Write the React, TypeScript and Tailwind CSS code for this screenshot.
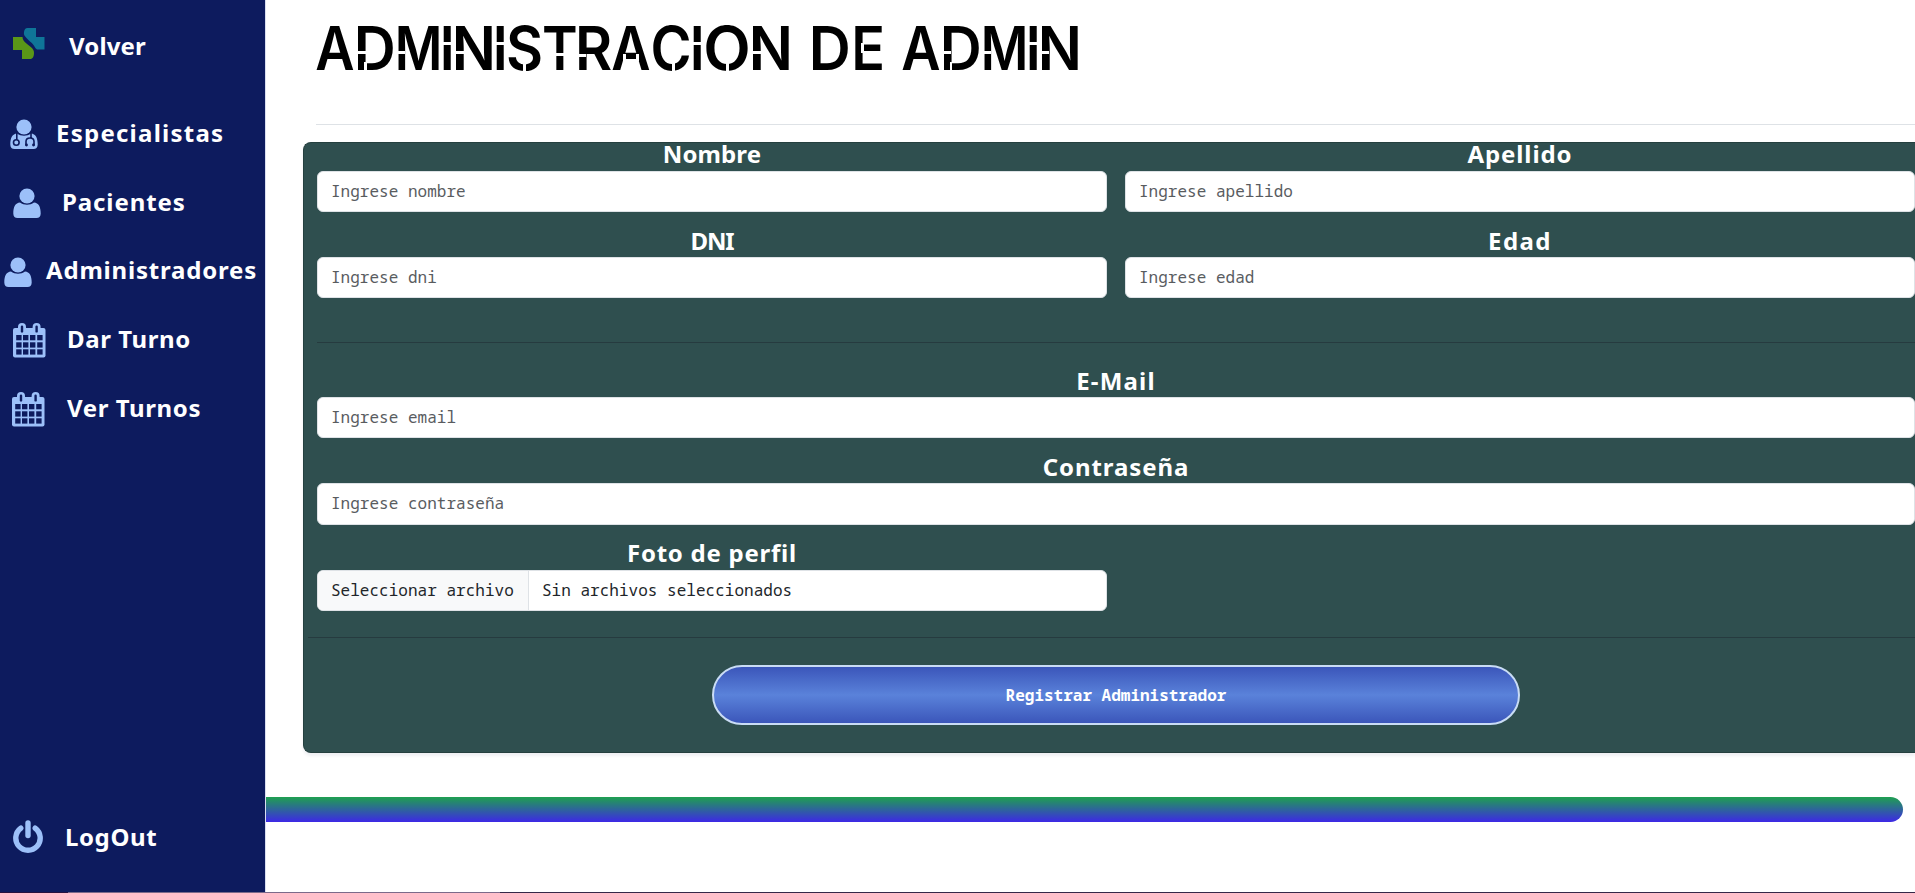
import type { ReactNode } from "react";

const LABEL_FONT = "font-['Noto_Sans','Open_Sans',sans-serif] font-bold text-[24px]";
const MONO_FONT = "font-['Noto_Sans_Mono','Liberation_Mono',monospace] font-normal text-[16px] tracking-[0.02px]";

function LogoIcon() {
  return (
    <svg width="34" height="33" viewBox="0 0 34 33" className="shrink-0">
      <path d="M15.500 1H24v9h8.500v12.500H26c-2.500 0-3-2.500-4.500-4.500-2-2.800-5-4.500-7-7C12.500 9 11.500 7.500 12 5c.4-2.500 1.500-4 3.500-4z" fill="#0f7598" />
      <path d="M1 10h9.500c0 2.500 1.500 4.500 4 6.500 3 2.500 7.500 5 7.500 9 0 4-1 6.500-4 6.500h-8v-9H1z" fill="#5a9718" />
    </svg>
  );
}

function UserShape() {
  return (
    <>
      <circle cx="14" cy="8" r="7.600" />
      <path d="M7 14.500C2.500 15 .3 18.500.3 25.500.3 28.500 2 30 4.500 30h19c2.500 0 4.200-1.500 4.200-4.500 0-7-2.200-10.500-6.700-11-4 3-10 3-14 0z" />
    </>
  );
}

function UserIcon() {
  return (
    <svg width="28" height="30" viewBox="0 0 28 30" fill="#9cc0f9" className="shrink-0">
      <UserShape />
    </svg>
  );
}

function DoctorIcon() {
  return (
    <svg width="28" height="30" viewBox="0 0 28 30" fill="#9cc0f9" className="shrink-0">
      <UserShape />
      <g fill="none" stroke="#0d1b5e" strokeWidth="1.600">
        <path d="M6.800 14v6.500" />
        <circle cx="6.300" cy="23.500" r="2.800" />
        <path d="M21 14v5M16 26.500v-4c0-2 1.500-3.500 4-3.500s4 1.500 4 3.500v4" />
      </g>
      <g fill="#0d1b5e">
        <circle cx="16.500" cy="26" r="1.400" />
        <circle cx="23.500" cy="26" r="1.400" />
      </g>
    </svg>
  );
}

function CalendarIcon() {
  const xs = [3.2, 10, 17, 24.2];
  const ys = [12, 19.3, 26.3];
  return (
    <svg width="33" height="35" viewBox="0 0 33 35" className="shrink-0">
      <rect x="0" y="5" width="32.500" height="29.500" rx="2" fill="#9cc0f9" />
      <rect x="5" y="0" width="8" height="11" rx="4" fill="#9cc0f9" />
      <rect x="19.600" y="0" width="8" height="11" rx="4" fill="#9cc0f9" />
      <rect x="7.800" y="2.600" width="2.400" height="7" rx="1.200" fill="#0d1b5e" />
      <rect x="22.400" y="2.600" width="2.400" height="7" rx="1.200" fill="#0d1b5e" />
      {ys.map((y) =>
        xs.map((x) => <rect key={`${x}-${y}`} x={x} y={y} width="5.400" height="5.300" fill="#0d1b5e" />),
      )}
    </svg>
  );
}

function PowerIcon() {
  return (
    <svg width="30" height="33" viewBox="0 0 30 33" fill="none" stroke="#9cc0f9" strokeWidth="5.400" strokeLinecap="round" className="shrink-0">
      <path d="M15 3v12.500" />
      <path d="M7.800 8.200a12.200 12.200 0 1 0 14.400 0" />
    </svg>
  );
}

function NavItem({ icon, text, className, spacing }: { icon: ReactNode; text: string; className: string; spacing: string }) {
  return (
    <a href="#" className={`flex items-center whitespace-nowrap text-white leading-[30px] ${LABEL_FONT} ${className}`}>
      {icon}
      <span className={spacing}>{text}</span>
    </a>
  );
}

function Field({ label, placeholder, spacing, inputHeight = "h-[41px]" }: { label: string; placeholder: string; spacing: string; inputHeight?: string }) {
  return (
    <div className="flex min-w-0 flex-1 flex-col">
      <label className={`h-[29px] text-center text-white ${LABEL_FONT} ${spacing}`}>{label}</label>
      <input
        placeholder={placeholder}
        className={`w-full rounded-md border border-[#dee2e6] bg-white px-[13px] pb-[2px] text-[#212529] placeholder:text-[#595c5f] ${inputHeight} ${MONO_FONT}`}
      />
    </div>
  );
}

/* One stencil letter: the glyph sits in a fixed cell, each cut is a thin white bar across a stroke. */
function Glyph({ char, cell, glyph = "", cuts = [] }: { char: string; cell: string; glyph?: string; cuts?: string[] }) {
  return (
    <span className={`relative flex h-[73px] shrink-0 justify-center ${cell}`}>
      <span className={glyph}>{char}</span>
      {cuts.map((cut) => (
        <span key={cut} className={`absolute bg-white ${cut}`} />
      ))}
    </span>
  );
}

const D_CUTS = ["left-[1px] top-[39px] h-[3px] w-[9px]", "left-[8.5px] top-[50px] h-[9px] w-[2.5px]"];
const M_CUTS = ["left-0 top-[39px] h-[2.5px] w-[9px]"];
const N_CUTS = ["left-px top-[39px] h-[2.5px] w-[9px]"];
const I_CUTS = ["left-0 top-[30px] h-[2.5px] w-full"];

function Title() {
  return (
    <h1 className="mt-[12px] -ml-px flex font-['Inter',sans-serif] text-[60px] leading-[73px] font-semibold text-black">
      <Glyph char="A" cell="w-[40.5px]" glyph="scale-x-90" />
      <Glyph char="D" cell="w-[40px]" glyph="-translate-x-px scale-x-97" cuts={D_CUTS} />
      <Glyph char="M" cell="w-[46px]" glyph="scale-x-86" cuts={M_CUTS} />
      <Glyph char="I" cell="w-[12px]" glyph="scale-x-90" cuts={I_CUTS} />
      <Glyph char="N" cell="w-[41px]" glyph="scale-x-97" cuts={N_CUTS} />
      <Glyph char="I" cell="w-[11.5px]" glyph="scale-x-90" cuts={I_CUTS} />
      <Glyph char="S" cell="w-[37px]" glyph="scale-x-95" cuts={["left-[17px] top-[46px] h-[15px] w-[3px]"]} />
      <Glyph char="T" cell="w-[33px]" glyph="scale-x-90" cuts={["left-[11px] top-[41px] h-[2.5px] w-[11px]"]} />
      <Glyph char="R" cell="w-[35px]" glyph="scale-x-95" cuts={["left-px top-[42px] h-[2.5px] w-[8.5px]"]} />
      <Glyph
        char="A"
        cell="w-[39.5px]"
        glyph="scale-x-90"
        cuts={["left-[12px] top-[42px] h-[7px] w-[2.5px]", "left-[25px] top-[42px] h-[7px] w-[2.5px]"]}
      />
      <Glyph char="C" cell="w-[40.5px]" glyph="scale-x-93" cuts={["left-[21px] top-[48px] h-[13px] w-[3px]"]} />
      <Glyph char="I" cell="w-[12.5px]" glyph="scale-x-90" cuts={I_CUTS} />
      <Glyph char="O" cell="w-[47.5px]" glyph="scale-x-103" cuts={["left-[22px] top-[48px] h-[13px] w-[3.5px]"]} />
      <Glyph char="N" cell="w-[40px]" glyph="scale-x-97" cuts={N_CUTS} />
      <span className="w-[18px] shrink-0"> </span>
      <Glyph char="D" cell="w-[42px]" glyph="scale-x-97" />
      <Glyph char="E" cell="w-[34px]" glyph="scale-x-93" cuts={["left-[9.5px] top-[31px] h-[10px] w-[3px]"]} />
      <span className="w-[16px] shrink-0"> </span>
      <Glyph char="A" cell="w-[40px]" glyph="scale-x-90" />
      <Glyph char="D" cell="w-[41px]" glyph="-translate-x-px scale-x-97" cuts={D_CUTS} />
      <Glyph char="M" cell="w-[45px]" glyph="scale-x-86" cuts={M_CUTS} />
      <Glyph char="I" cell="w-[12px]" glyph="scale-x-90" cuts={I_CUTS} />
      <Glyph char="N" cell="w-[41px]" glyph="scale-x-97" cuts={N_CUTS} />
    </h1>
  );
}

export default function App() {
  return (
    <div className="flex h-[893px] w-[1915px] flex-col overflow-hidden bg-white">
      <div className="flex h-[892px]">
        <aside className="flex w-[266px] shrink-0 flex-col border-r border-[#d9def0] bg-[#0d1b5e]">
          <NavItem icon={<LogoIcon />} text="Volver" className="mt-[9px] h-[69px] gap-[23px] pl-[12px]" spacing="pt-[5px] tracking-[0.15px]" />
          <nav className="mt-[21px] flex flex-col">
            <NavItem icon={<DoctorIcon />} text="Especialistas" className="h-[69px] gap-[18px] pl-[10px]" spacing="pb-px tracking-[1.25px]" />
            <NavItem icon={<UserIcon />} text="Pacientes" className="h-[69px] gap-[21px] pl-[13px]" spacing="pb-px tracking-[0.9px]" />
            <NavItem icon={<UserIcon />} text="Administradores" className="h-[69px] gap-[14px] pl-[4px]" spacing="pb-[3px] tracking-[0.8px]" />
            <NavItem icon={<CalendarIcon />} text="Dar Turno" className="h-[69px] gap-[21px] pl-[13px]" spacing="pb-[3px] tracking-[0.6px]" />
            <NavItem icon={<CalendarIcon />} text="Ver Turnos" className="h-[68px] gap-[22px] pl-[12px]" spacing="pb-[3px] tracking-[0.6px]" />
          </nav>
          <NavItem icon={<PowerIcon />} text="LogOut" className="mt-auto mb-[21px] h-[69px] gap-[22px] pl-[13px]" spacing="tracking-[0.6px]" />
        </aside>

        <main className="flex min-w-0 flex-1 flex-col">
          <header className="ml-[50px] flex h-[125px] items-start border-b border-[#dee2e6]">
            <Title />
          </header>

          <form className="mt-[17px] ml-[37px] flex h-[611px] flex-col rounded-l-lg border-y border-l border-[#25403f] bg-[#2f4f4f] pl-[13px] shadow-[0_3px_3px_rgba(33,37,90,0.07)]">
            <div className="-mt-px flex gap-[18px]">
              <Field label="Nombre" placeholder="Ingrese nombre" spacing="leading-[23px] tracking-[0.1px]" />
              <Field label="Apellido" placeholder="Ingrese apellido" spacing="leading-[23px] tracking-[0.9px]" />
            </div>
            <div className="mt-[16px] flex gap-[18px]">
              <Field label="DNI" placeholder="Ingrese dni" spacing="leading-[25px] tracking-[-1.1px]" />
              <Field label="Edad" placeholder="Ingrese edad" spacing="leading-[25px] tracking-[1.4px]" />
            </div>
            <hr className="mt-[44px] border-[#263b3f]" />
            <div className="mt-[25px] flex">
              <Field label="E-Mail" placeholder="Ingrese email" spacing="leading-[25px] tracking-[1.2px]" />
            </div>
            <div className="mt-[16px] flex">
              <Field label="Contraseña" placeholder="Ingrese contraseña" spacing="leading-[25px] tracking-[0.9px]" inputHeight="h-[42px]" />
            </div>
            <div className="mt-[16px] flex w-[790px] flex-col">
              <label className={`h-[29px] text-center leading-[24px] tracking-[0.75px] text-white ${LABEL_FONT}`}>Foto de perfil</label>
              <div className={`flex h-[41px] items-stretch overflow-hidden rounded-md border border-[#dee2e6] bg-white leading-[38px] text-[#212529] ${MONO_FONT}`}>
                <span className="w-[211px] border-r border-[#dee2e6] bg-[#f8f9fa] pl-[13px]">Seleccionar archivo</span>
                <span className="pl-[13px]">Sin archivos seleccionados</span>
              </div>
            </div>
            <hr className="mt-[26px] -ml-[9px] border-[#263b3f]" />
            <button
              type="button"
              className="mt-[27px] ml-[395px] h-[60px] w-[808px] rounded-full border-2 border-[#c9dcf5] bg-linear-to-b/srgb from-[#3b56ba] via-[#5a82da] to-[#3b56ba] font-['Noto_Sans_Mono','Liberation_Mono',monospace] text-[16px] font-bold text-white"
            >
              Registrar Administrador
            </button>
          </form>

          <div className="mt-[44px] h-[25px] w-[1637px] rounded-r-full bg-linear-to-b/srgb from-[#1fa050] to-[#3d28e6]" />
        </main>
      </div>
      <div className="flex h-px bg-[#352848]">
        <div className="w-[68px] bg-[#26123f]" />
        <div className="w-[432px] bg-[#7b6a8a]" />
      </div>
    </div>
  );
}
